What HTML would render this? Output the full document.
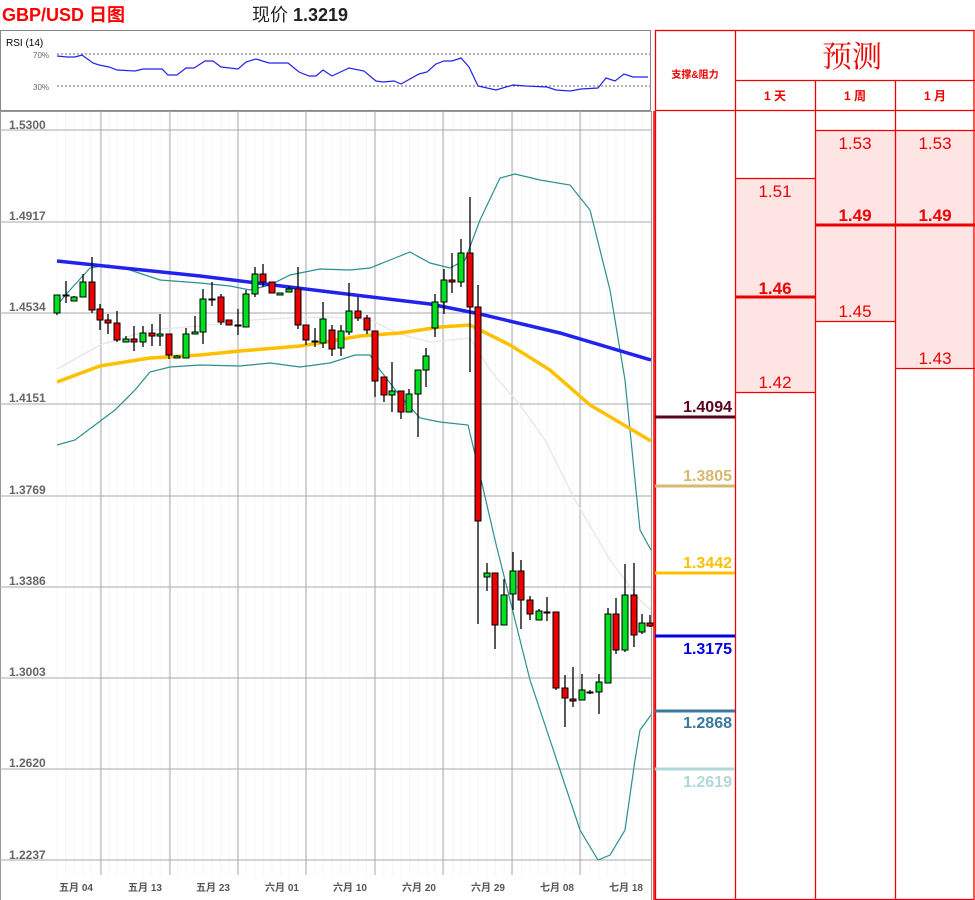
<!DOCTYPE html>
<html><head><meta charset="utf-8"><style>
html,body{margin:0;padding:0;background:#fff;}
svg{display:block;font-family:"Liberation Sans","Noto Sans CJK SC",sans-serif;}
</style></head><body>
<svg width="975" height="900" viewBox="0 0 975 900" xmlns="http://www.w3.org/2000/svg">
<text x="2" y="21" font-size="18" font-weight="bold" fill="#ff0000">GBP/USD 日图</text>
<text x="252" y="21" font-size="18" fill="#222">现价 <tspan font-weight="bold">1.3219</tspan></text>
<!-- RSI -->
<rect x="0.5" y="30.5" width="650" height="80" fill="#fff" stroke="#888"/>
<text x="6" y="46" font-size="10" fill="#000">RSI (14)</text>
<line x1="57" y1="54" x2="650" y2="54" stroke="#666" stroke-dasharray="2,2"/>
<line x1="57" y1="86" x2="650" y2="86" stroke="#666" stroke-dasharray="2,2"/>
<text x="33" y="58" font-size="8" fill="#666">70%</text>
<text x="33" y="90" font-size="8" fill="#666">30%</text>
<polyline fill="none" stroke="#2222ee" stroke-width="1.2" points="57,56 67,57 75,57 82,55 93,63 99,65 109,67 117,70 135,71 143,69 162,69 168,75 177,75 186,68 194,68 205,61 213,61 221,67 238,69 246,62 256,59 269,63 288,63 299,72 309,76 316,76 323,70 332,76 349,68 364,71 376,81 383,82 394,81 401,84 419,74 427,72 436,64 444,61 452,61 461,58 469,67 478,86 496,90 513,85 526,86 547,87 556,90 570,91 581,89 598,88 606,78 615,81 624,74 633,77 648,77"/>
<!-- main chart -->
<rect x="0.5" y="111.5" width="651" height="790" fill="#fff" stroke="#999"/>
<g stroke="#f6f6f6" stroke-width="1" id="minor"></g>
<g stroke="#aaa" stroke-width="1">
<line x1="0" y1="130" x2="651" y2="130"/><line x1="0" y1="222" x2="651" y2="222"/><line x1="0" y1="313" x2="651" y2="313"/><line x1="0" y1="404" x2="651" y2="404"/><line x1="0" y1="496" x2="651" y2="496"/><line x1="0" y1="587" x2="651" y2="587"/><line x1="0" y1="678" x2="651" y2="678"/><line x1="0" y1="769" x2="651" y2="769"/><line x1="0" y1="860" x2="651" y2="860"/>
<line x1="101" y1="111" x2="101" y2="875"/><line x1="170" y1="111" x2="170" y2="875"/><line x1="238" y1="111" x2="238" y2="875"/><line x1="306" y1="111" x2="306" y2="875"/><line x1="375" y1="111" x2="375" y2="875"/><line x1="443" y1="111" x2="443" y2="875"/><line x1="512" y1="111" x2="512" y2="875"/><line x1="580" y1="111" x2="580" y2="875"/>
</g>
<g font-size="12" font-weight="bold" fill="#666">
<text x="9" y="129">1.5300</text><text x="9" y="220">1.4917</text><text x="9" y="311">1.4534</text><text x="9" y="402">1.4151</text><text x="9" y="494">1.3769</text><text x="9" y="585">1.3386</text><text x="9" y="676">1.3003</text><text x="9" y="767">1.2620</text><text x="9" y="859">1.2237</text>
</g>
<g font-size="10" font-weight="bold" fill="#555" text-anchor="middle">
<text x="76" y="891">五月 04</text><text x="145" y="891">五月 13</text><text x="213" y="891">五月 23</text><text x="282" y="891">六月 01</text><text x="350" y="891">六月 10</text><text x="419" y="891">六月 20</text><text x="488" y="891">六月 29</text><text x="557" y="891">七月 08</text><text x="626" y="891">七月 18</text>
</g>
<!-- bands -->
<polyline fill="none" stroke="#e6e6e6" stroke-width="1.3" points="57,369 100,345 150,330 200,326 250,320 290,318 330,317 370,320 400,334 430,342 470,338 490,370 520,405 545,440 575,500 610,560 640,600 651,610"/>
<polyline fill="none" stroke="#2a9090" stroke-width="1.2" points="57,305 70,290 90,268 108,265 130,270 160,280 200,283 230,286 250,290 270,285 290,275 320,269 350,270 370,268 395,258 410,252 430,263 450,268 465,260 480,220 500,178 515,174 540,180 570,185 590,210 610,290 625,380 640,530 651,550"/>
<polyline fill="none" stroke="#2a9090" stroke-width="1.2" points="57,445 75,440 95,425 115,410 135,390 150,372 170,367 200,365 240,366 270,363 300,367 330,363 355,355 370,355 380,370 400,396 420,418 440,422 468,425 480,475 495,540 510,600 530,680 560,770 580,830 598,860 610,855 625,830 635,760 640,730 651,715"/>
<polyline fill="none" stroke="#ffc000" stroke-width="3.5" points="57,382 100,366 150,358 200,355 240,351 300,346 320,343 360,336 400,333 440,327 470,325 510,345 550,370 590,405 651,441"/>
<polyline fill="none" stroke="#2222ee" stroke-width="3.5" points="57,261 200,276 330,292 430,304 480,314 560,333 651,360"/>
<g id="candles" stroke="#000" stroke-width="1"></g>
<line x1="654" y1="111" x2="654" y2="900" stroke="#e00" stroke-width="1.5"/>
<!-- right panel -->
<g fill="#ffe4e4">
<rect x="736" y="178" width="79" height="214"/>
<rect x="816" y="130" width="79" height="191"/>
<rect x="896" y="130" width="78" height="238"/>
</g>
<g stroke="#e00" stroke-width="1.3" fill="none">
<rect x="655.5" y="30.5" width="318.5" height="869"/>
<line x1="735.5" y1="30" x2="735.5" y2="900"/>
<line x1="815.5" y1="80" x2="815.5" y2="900"/>
<line x1="895.5" y1="80" x2="895.5" y2="900"/>
<line x1="735" y1="80.5" x2="975" y2="80.5"/>
<line x1="655" y1="110.5" x2="975" y2="110.5"/>
<line x1="815" y1="130.5" x2="975" y2="130.5"/>
<line x1="735" y1="178.5" x2="815" y2="178.5"/>
<line x1="735" y1="392.5" x2="815" y2="392.5"/>
<line x1="815" y1="321.5" x2="895" y2="321.5"/>
<line x1="895" y1="368.5" x2="975" y2="368.5"/>
</g>
<g stroke="#e00" stroke-width="3">
<line x1="735" y1="297" x2="815" y2="297"/>
<line x1="815" y1="225" x2="975" y2="225"/>
</g>
<text x="852" y="67" font-size="30" fill="#e00" text-anchor="middle" font-family="'Noto Serif CJK SC',serif">预测</text>
<text x="695" y="78" font-size="10" font-weight="bold" fill="#e00" text-anchor="middle">支撑&amp;阻力</text>
<g font-size="12" font-weight="bold" fill="#e00" text-anchor="middle">
<text x="775" y="100">1 天</text><text x="855" y="100">1 周</text><text x="935" y="100">1 月</text>
</g>
<g font-size="17" fill="#e00" text-anchor="middle">
<text x="775" y="197">1.51</text><text x="775" y="294" font-weight="bold">1.46</text><text x="775" y="388">1.42</text>
<text x="855" y="149">1.53</text><text x="855" y="221" font-weight="bold">1.49</text><text x="855" y="317">1.45</text>
<text x="935" y="149">1.53</text><text x="935" y="221" font-weight="bold">1.49</text><text x="935" y="364">1.43</text>
</g>
<g stroke-width="3">
<line x1="655" y1="417" x2="735" y2="417" stroke="#5a0020"/>
<line x1="655" y1="486" x2="735" y2="486" stroke="#d8b870"/>
<line x1="655" y1="573" x2="735" y2="573" stroke="#ffc000"/>
<line x1="655" y1="636" x2="735" y2="636" stroke="#0000e0"/>
<line x1="655" y1="711" x2="735" y2="711" stroke="#3a78a0"/>
<line x1="655" y1="769" x2="735" y2="769" stroke="#b0d8d8"/>
</g>
<g font-size="16" font-weight="bold" text-anchor="end">
<text x="732" y="412" fill="#5a0020">1.4094</text>
<text x="732" y="481" fill="#d8b870">1.3805</text>
<text x="732" y="568" fill="#ffc000">1.3442</text>
<text x="732" y="654" fill="#0000e0">1.3175</text>
<text x="732" y="728" fill="#3a78a0">1.2868</text>
<text x="732" y="787" fill="#b0d8d8">1.2619</text>
</g>
</svg>
<script>
var C=[[57,'g',295,313,295,315],[66,'d',295,296,281,303],[74,'g',297,301,296,301],[83,'g',282,297,274,297],[92,'r',282,310,257,313],[100,'r',309,320,304,330],[108,'r',320,323,314,334],[117,'r',323,340,311,342],[126,'g',339,342,336,342],[134,'r',339,342,326,351],[143,'g',333,342,326,347],[152,'r',333,336,324,346],[160,'g',334,336,314,346],[169,'r',334,355,334,359],[177,'g',356,358,355,358],[186,'g',334,358,328,358],[195,'g',332,334,316,334],[203,'g',299,332,289,344],[212,'d',299,300,282,306],[221,'r',297,322,294,325],[229,'r',320,325,320,325],[238,'r',325,326,309,335],[246,'g',294,327,290,327],[255,'g',274,294,267,297],[263,'r',274,282,264,287],[272,'r',282,293,282,293],[280,'g',293,295,293,295],[289,'g',289,292,286,292],[298,'r',289,325,267,329],[306,'r',325,340,325,345],[315,'d',341,342,328,347],[323,'g',319,343,302,348],[332,'r',330,349,325,356],[341,'g',331,348,325,356],[349,'g',311,332,283,335],[358,'r',311,318,297,321],[367,'r',318,330,315,334],[375,'r',331,381,331,397],[384,'r',377,395,377,402],[392,'g',391,395,362,412],[401,'r',391,412,391,419],[409,'g',394,412,389,412],[418,'g',370,394,370,437],[426,'g',356,370,348,387],[435,'g',302,328,294,337],[444,'g',280,302,269,314],[452,'r',280,282,253,293],[461,'g',253,282,239,287],[470,'r',253,307,197,372],[478,'r',307,521,285,624],[487,'g',573,577,563,591],[495,'r',573,625,573,649],[504,'g',595,625,579,625],[513,'g',571,594,552,610],[521,'r',571,600,560,629],[530,'r',600,614,596,620],[539,'g',611,620,609,620],[547,'d',612,613,597,621],[556,'r',612,688,612,690],[565,'r',688,698,675,727],[573,'r',699,701,667,707],[582,'g',690,700,674,700],[590,'d',692,693,690,694],[599,'g',682,692,674,714],[608,'g',614,683,608,683],[616,'r',614,650,598,654],[625,'g',595,650,564,652],[634,'r',595,635,563,647],[642,'g',623,632,614,634],[650,'r',623,626,615,627]];
var ns="http://www.w3.org/2000/svg",g=document.getElementById('candles'),m=document.getElementById('minor');
for(var x=57;x<651;x+=8.6){var l=document.createElementNS(ns,'line');l.setAttribute('x1',x);l.setAttribute('x2',x);l.setAttribute('y1',112);l.setAttribute('y2',875);m.appendChild(l);}
C.forEach(function(c){var x=c[0];var l=document.createElementNS(ns,'line');l.setAttribute('x1',x);l.setAttribute('x2',x);l.setAttribute('y1',c[4]);l.setAttribute('y2',c[5]);l.setAttribute('stroke-width','1.3');g.appendChild(l);
var r=document.createElementNS(ns,'rect');r.setAttribute('x',x-3);r.setAttribute('width',6);r.setAttribute('y',c[2]);r.setAttribute('height',Math.max(1,c[3]-c[2]));r.setAttribute('fill',c[1]=='g'?'#00e020':(c[1]=='r'?'#ee0000':'#000'));g.appendChild(r);});
</script>
</body></html>
